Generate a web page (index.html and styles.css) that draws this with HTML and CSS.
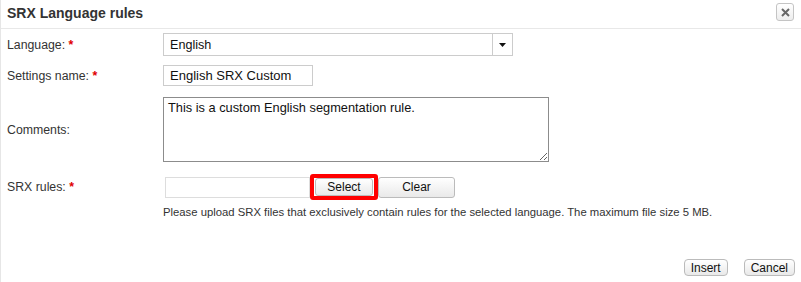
FILE: index.html
```html
<!DOCTYPE html>
<html lang="en">
<head>
  <meta charset="UTF-8">
  <title>SRX Language rules</title>
  <link rel="stylesheet" href="styles.css">
</head>
<body>
  <div class="dialog">
    <div class="dialog-header">
      <span class="dialog-title">SRX Language rules</span>
      <button class="close-btn" title="Close">
        <svg width="9" height="9" viewBox="0 0 9 9"><path d="M1 1 L8 8 M8 1 L1 8" stroke="#666" stroke-width="2"/></svg>
      </button>
    </div>
    <div class="form">
      <div class="row row-lang">
        <label class="label">Language: <span class="req">*</span></label>
        <div class="select-box">
          <span class="select-value">English</span>
          <span class="select-arrow"><svg width="7" height="4" viewBox="0 0 7 4"><path d="M0 0 L7 0 L3.5 4 Z" fill="#111"/></svg></span>
        </div>
      </div>
      <div class="row row-name">
        <label class="label">Settings name: <span class="req">*</span></label>
        <input class="text-input" type="text" value="English SRX Custom">
      </div>
      <div class="row row-comments">
        <label class="label">Comments:</label>
        <textarea class="comments">This is a custom English segmentation rule.</textarea>
      </div>
      <div class="row row-file">
        <label class="label">SRX rules: <span class="req">*</span></label>
        <div class="file-group">
          <span class="file-name"></span>
          <span class="highlight"><button class="btn btn-select">Select</button></span>
          <button class="btn btn-clear">Clear</button>
        </div>
      </div>
      <div class="row row-help">
        <span></span>
        <p class="help">Please upload SRX files that exclusively contain rules for the selected language. The maximum file size 5 MB.</p>
      </div>
    </div>
    <div class="dialog-footer">
      <button class="btn btn-footer">Insert</button>
      <button class="btn btn-footer">Cancel</button>
    </div>
  </div>
</body>
</html>
```

FILE: styles.css
```css
body {
  margin: 0;
  background: #ffffff;
  font-family: "Liberation Sans", Arial, sans-serif;
  color: #333333;
}
.dialog {
  height: 282px;
  border-left: 1px solid #e6e6e6;
  box-sizing: border-box;
}
.dialog-header {
  height: 28px;
  border-bottom: 1px solid #e8e8e8;
  display: flex;
  align-items: center;
  justify-content: space-between;
  padding: 0 7px 0 6px;
}
.dialog-title {
  font-size: 14px;
  font-weight: bold;
  color: #333333;
  margin-top: -2px;
}
.close-btn {
  width: 18px;
  height: 18px;
  padding: 0;
  margin-top: -4px;
  border: 1px solid #c4c4c4;
  border-radius: 3px;
  background: linear-gradient(#ffffff, #ededed);
  display: flex;
  align-items: center;
  justify-content: center;
}
.form {
  padding: 4px 0 0 6px;
}
.row {
  display: grid;
  grid-template-columns: 156px 1fr;
  align-items: center;
  font-size: 12.3px;
}
.label {
  color: #333333;
}
.req {
  color: #e00000;
  font-weight: bold;
}
.select-box {
  width: 350px;
  height: 23px;
  border: 1px solid #cccccc;
  box-sizing: border-box;
  display: flex;
  align-items: center;
}
.select-value {
  flex: 1;
  padding-left: 6px;
  font-size: 12.6px;
  color: #111111;
}
.select-arrow {
  width: 19px;
  height: 100%;
  border-left: 1px solid #cccccc;
  display: flex;
  align-items: center;
  justify-content: center;
}
.row-name {
  margin-top: 9px;
}
.text-input {
  width: 150px;
  height: 21px;
  box-sizing: border-box;
  border: 1px solid #cccccc;
  padding: 0 6px;
  font-family: inherit;
  font-size: 13px;
  color: #111111;
  outline: none;
}
.row-comments {
  margin-top: 11px;
}
.comments {
  width: 386px;
  height: 65px;
  box-sizing: border-box;
  border: 1px solid #8c8c8c;
  padding: 2px 4px;
  font-family: inherit;
  font-size: 12.8px;
  color: #111111;
  resize: both;
  outline: none;
}
.row-file {
  margin-top: 12px;
}
.file-group {
  display: flex;
  align-items: center;
  margin-left: 2px;
}
.file-name {
  width: 145px;
  height: 21px;
  box-sizing: border-box;
  border: 1px solid #dddddd;
}
.highlight {
  border: 4px solid #ff0000;
  border-radius: 3px;
  padding: 0 1px;
  display: flex;
}
.btn {
  font-family: inherit;
  font-size: 12px;
  color: #111111;
  border: 1px solid #bbbbbb;
  border-radius: 3px;
  background: linear-gradient(#ffffff, #e9e9e9);
  padding: 0;
}
.btn-select {
  width: 58px;
  height: 18px;
}
.btn-clear {
  width: 77px;
  height: 21px;
}
.row-help {
  margin-top: 4px;
}
.help {
  margin: 0;
  font-size: 11.3px;
  line-height: 17px;
  color: #333333;
}
.dialog-footer {
  display: flex;
  justify-content: flex-end;
  gap: 16px;
  padding: 38px 6px 0 0;
}
.btn-footer {
  height: 17px;
  padding: 0 6px;
  font-size: 12px;
  border-radius: 4px;
}
```
